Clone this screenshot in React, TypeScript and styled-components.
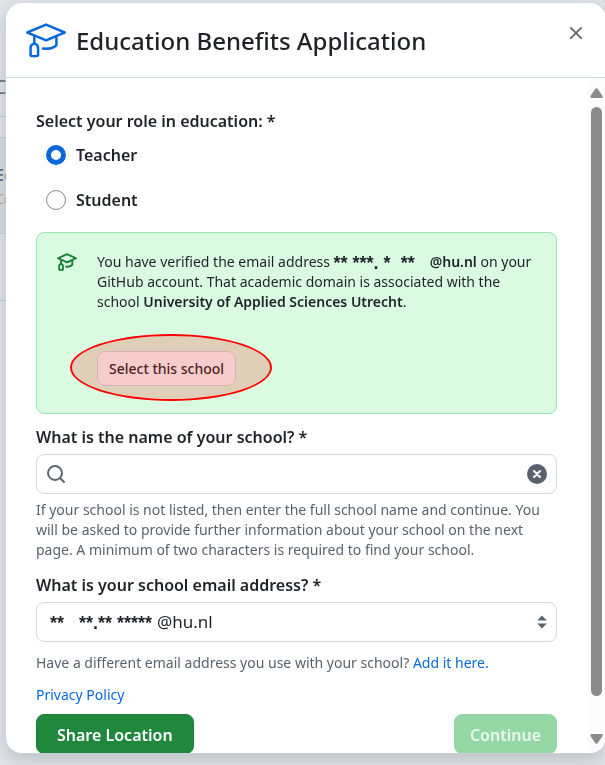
import React from "react";
import styled, { createGlobalStyle } from "styled-components";
import { GoMortarBoard } from "react-icons/go";

const GlobalStyle = createGlobalStyle`
  *, *::before, *::after { box-sizing: border-box; }
  body {
    margin: 0;
    font-family: "Noto Sans", "Open Sans", sans-serif;
    font-size: 14px;
    line-height: 20px;
    color: #1f2328;
    background: #e1e5e9;
    overflow: hidden;
  }
  button, input, select { font: inherit; color: inherit; }
  a { color: #0969da; text-decoration: none; }
`;

const Backdrop = styled.div`
  min-height: 100vh;
  padding-top: 77px;
  overflow: hidden;
  white-space: nowrap;
`;

const PageHeading = styled.p`
  margin: 0 0 0 -6px;
  height: 40px;
  font-size: 20px;
  color: #6b7075;
  border-bottom: 1px solid #c5cdd5;
`;

const PageCard = styled.div`
  margin-top: 20px;
  margin-left: -6px;
  height: 97px;
  padding-top: 27px;
  background: #d9dde1;
  border: 1px solid #c5cdd5;
`;

const PageCardTitle = styled.p`
  margin: 0;
  height: 24px;
  font-size: 16px;
  font-weight: 600;
  color: #59708c;
`;

const PageCardText = styled.p`
  margin: 0;
  color: #b0a6a4;
`;

const PageRule = styled.hr`
  margin: 66px 0 0;
  border: 0;
  border-top: 1px solid #c5cdd5;
`;

const Dialog = styled.div`
  position: fixed;
  inset: 3px -1px 12px 6px;
  display: flex;
  flex-direction: column;
  background: #fff;
  border-radius: 16px;
  box-shadow: 0 0 0 1px #d0d7de80, 0 6px 18px rgba(66, 74, 83, 0.25);
  overflow: hidden;
`;

const DialogHeader = styled.header`
  display: flex;
  align-items: center;
  flex: none;
  height: 75px;
  padding: 0 20px;
  gap: 10px;
  border-bottom: 1px solid #d0d7de;

  > svg { color: #0969da; flex: none; }
`;

const Title = styled.h1`
  flex: 1;
  margin: 0;
  padding-top: 2px;
  font-size: 24px;
  font-weight: 500;
  line-height: 32px;
`;

const IconButton = styled.button`
  display: grid;
  place-items: center;
  align-self: flex-start;
  width: 20px;
  height: 20px;
  margin-top: 20px;
  padding: 0;
  border: 0;
  background: none;
  color: #59636e;
`;

const DialogBody = styled.div`
  display: flex;
  flex: 1;
  min-height: 0;
`;

const Form = styled.form`
  flex: 1;
  min-width: 0;
  padding: 31px 30px 0;
  overflow: hidden;
`;

const RoleGroup = styled.fieldset`
  margin: 0 0 10px;
  padding: 0;
  border: 0;
`;

const Legend = styled.legend`
  padding: 0;
  font-size: 16px;
  font-weight: 600;
  line-height: 24px;
`;

const RadioLabel = styled.label`
  display: flex;
  align-items: center;
  gap: 10px;
  height: 45px;
  padding-left: 10px;
  font-size: 16px;
  font-weight: 600;

  &:first-of-type { margin-top: -1px; }
`;

const Radio = styled.input`
  appearance: none;
  flex: none;
  width: 20px;
  height: 20px;
  margin: 0;
  border: 1px solid #818b98;
  border-radius: 50%;
  background: #fff;

  &:checked { border: 5px solid #0969da; }
`;

const Notice = styled.section`
  display: flex;
  gap: 20px;
  padding: 19px 20px 27px;
  background: #dafbe1;
  border: 1px solid #9be3ad;
  border-radius: 8px;

  > svg { color: #1a7f37; flex: none; }
`;

const NoticeText = styled.p`
  margin: 0 0 39px;

  strong { font-weight: 600; }
`;

const Mask = styled.span`
  font-family: "Liberation Sans", sans-serif;
  font-size: 18px;
  line-height: 16px;
  font-weight: 700;
  vertical-align: text-bottom;
  white-space: pre;
`;

const Circled = styled.div`
  position: relative;
  width: max-content;
`;

const Ellipse = styled.span`
  position: absolute;
  inset: -17px -36px -15px -27px;
  border: 2px solid #f00;
  border-radius: 50%;
  background: rgba(248, 36, 20, 0.2);
  background-clip: padding-box;
  pointer-events: none;
`;

const SmallButton = styled.button`
  display: block;
  height: 35px;
  padding: 0 11px;
  border: 1px solid #d5d3da;
  border-radius: 8px;
  background: #f6f8fa;
  font-weight: 500;
`;

const FieldLabel = styled.label`
  display: block;
  margin: 12px 0 6px;
  font-size: 16px;
  font-weight: 600;
  line-height: 22px;
`;

const Control = styled.div`
  position: relative;
  display: flex;
  align-items: center;
  height: 40px;
  border: 1px solid #d1d9e0;
  border-radius: 8px;
  background: #fff;
`;

const SearchBox = styled(Control)`
  gap: 8px;
  padding: 0 9px;

  > svg { color: #59636e; flex: none; }
`;

const SearchInput = styled.input`
  flex: 1;
  min-width: 0;
  padding: 0;
  border: 0;
  outline: 0;
  background: none;
  font-size: 16px;
`;

const ClearButton = styled.button`
  display: grid;
  place-items: center;
  width: 20px;
  height: 20px;
  padding: 0;
  border: 0;
  border-radius: 50%;
  background: #59636e;
  color: #fff;
`;

const Hint = styled.p<{ $top: number }>`
  margin: ${(p) => p.$top}px 0 0;
  color: #59636e;

  & + ${FieldLabel} { margin-top: 14px; }
`;

const EmailSelect = styled.select`
  appearance: none;
  width: 100%;
  height: 100%;
  padding: 0 30px 0 120px;
  border: 0;
  border-radius: 8px;
  background: none;
  font-size: 17px;
`;

const SelectMask = styled(Mask)`
  position: absolute;
  left: 13px;
  top: 12px;
  pointer-events: none;
`;

const SelectArrows = styled.svg`
  position: absolute;
  right: 9px;
  pointer-events: none;
`;

const Policy = styled.p`
  margin: 12px 0 9px;
`;

const Actions = styled.div`
  display: flex;
  justify-content: space-between;
`;

const ActionButton = styled.button`
  height: 40px;
  padding: 2px 20px 0;
  border: 1px solid #1f7f3a;
  border-radius: 8px;
  background: #1f883d;
  color: #fff;
  font-size: 16px;
  font-weight: 600;

  &:disabled {
    padding: 2px 15px 0;
    border-color: #95d8a6;
    background: #95d8a6;
    color: #e9f7ed;
  }
`;

const ScrollTrack = styled.div`
  display: flex;
  flex: none;
  flex-direction: column;
  align-items: center;
  gap: 9px;
  width: 19px;
  padding: 10px 0 9px;
  background: #fcfcfc;

  > svg { flex: none; fill: #8b8b8b; }
`;

const ScrollThumb = styled.div`
  width: 11px;
  flex: 1;
  margin-bottom: 29px;
  border-radius: 6px;
  background: #8b8b8b;
`;

function SmallMortarBoard() {
  return (
    <svg width="20" height="20" viewBox="0 0 16 16" fill="currentColor" aria-hidden="true">
      <path d="M7.693 1.066a.747.747 0 0 1 .614 0l7.25 3.25a.75.75 0 0 1 0 1.368L13 6.831v2.794c0 1.024-.81 1.749-1.66 2.173-.893.447-2.075.702-3.34.702-.278 0-.55-.012-.816-.036a.75.75 0 0 1 .133-1.494c.22.02.45.03.683.03 1.082 0 2.025-.221 2.67-.543.69-.345.83-.682.83-.832V7.503L8.307 8.934a.747.747 0 0 1-.614 0L4 7.28v1.663c.296.105.575.275.812.512.438.438.688 1.059.688 1.796v3a.75.75 0 0 1-.75.75h-3a.75.75 0 0 1-.75-.75v-3c0-.737.25-1.358.688-1.796.237-.237.516-.407.812-.512V6.606L.443 5.684a.75.75 0 0 1 0-1.368ZM2.583 5 8 7.428 13.416 5 8 2.572ZM2.5 11.25v2.25H4v-2.25c0-.388-.125-.611-.25-.735a.697.697 0 0 0-.5-.203.707.707 0 0 0-.5.203c-.125.124-.25.347-.25.735Z" />
    </svg>
  );
}

function SearchIcon() {
  return (
    <svg width="20" height="20" viewBox="0 0 20 20" fill="none" stroke="currentColor" strokeWidth="1.9" strokeLinecap="round" aria-hidden="true">
      <circle cx="9" cy="9" r="7" />
      <path d="M14 14l4 4" />
    </svg>
  );
}

function CloseIcon() {
  return (
    <svg width="20" height="20" viewBox="0 0 20 20" fill="none" stroke="currentColor" strokeWidth="1.7" strokeLinecap="round" aria-hidden="true">
      <path d="M4.8 4.8l10.4 10.4M15.2 4.8L4.8 15.2" />
    </svg>
  );
}

export default function App() {
  return (
    <>
      <GlobalStyle />
      <Backdrop aria-hidden="true">
        <PageHeading>C</PageHeading>
        <PageCard>
          <PageCardTitle>Ed</PageCardTitle>
          <PageCardText>Co</PageCardText>
        </PageCard>
        <PageRule />
      </Backdrop>
      <Dialog role="dialog" aria-labelledby="dialog-title">
        <DialogHeader>
          <GoMortarBoard size={40} aria-hidden="true" />
          <Title id="dialog-title">Education Benefits Application</Title>
          <IconButton type="button" aria-label="Close">
            <CloseIcon />
          </IconButton>
        </DialogHeader>
        <DialogBody>
          <Form onSubmit={(e) => e.preventDefault()}>
            <RoleGroup>
              <Legend>Select your role in education: *</Legend>
              <RadioLabel>
                <Radio type="radio" name="role" value="teacher" defaultChecked />
                Teacher
              </RadioLabel>
              <RadioLabel>
                <Radio type="radio" name="role" value="student" />
                Student
              </RadioLabel>
            </RoleGroup>
            <Notice>
              <SmallMortarBoard />
              <div>
                <NoticeText>
                  You have verified the email address <Mask>{"** ***. *  **   "}</Mask>
                  <strong>@hu.nl</strong> on your GitHub account. That academic domain is
                  associated with the school{" "}
                  <strong>University of Applied Sciences Utrecht</strong>.
                </NoticeText>
                <Circled>
                  <SmallButton type="button">Select this school</SmallButton>
                  <Ellipse />
                </Circled>
              </div>
            </Notice>
            <FieldLabel htmlFor="school">What is the name of your school? *</FieldLabel>
            <SearchBox>
              <SearchIcon />
              <SearchInput id="school" type="text" />
              <ClearButton type="button" aria-label="Clear">
                <svg width="8" height="8" viewBox="0 0 8 8" stroke="currentColor" strokeWidth="2" strokeLinecap="round">
                  <path d="M1 1l6 6M7 1L1 7" />
                </svg>
              </ClearButton>
            </SearchBox>
            <Hint $top={6}>
              If your school is not listed, then enter the full school name and continue. You
              will be asked to provide further information about your school on the next
              page. A minimum of two characters is required to find your school.
            </Hint>
            <FieldLabel htmlFor="email">What is your school email address? *</FieldLabel>
            <Control>
              <EmailSelect id="email">
                <option>@hu.nl</option>
              </EmailSelect>
              <SelectMask>{"**   **.** *****"}</SelectMask>
              <SelectArrows width="10" height="14" viewBox="0 0 10 14" fill="#59636e" aria-hidden="true">
                <path d="M5 0.5L9.7 5.5H0.3ZM0.3 8.5H9.7L5 13.5Z" />
              </SelectArrows>
            </Control>
            <Hint $top={11}>
              Have a different email address you use with your school? <a href="#add">Add it here.</a>
            </Hint>
            <Policy>
              <a href="#privacy">Privacy Policy</a>
            </Policy>
            <Actions>
              <ActionButton type="button">Share Location</ActionButton>
              <ActionButton type="submit" disabled>
                Continue
              </ActionButton>
            </Actions>
          </Form>
          <ScrollTrack aria-hidden="true">
            <svg width="13" height="10" viewBox="0 0 13 10">
              <path d="M5.4 .8Q6.5-.3 7.6.8L12.6 8Q13.1 9.8 11.5 10H1.5Q-.1 9.8.4 8Z" />
            </svg>
            <ScrollThumb />
            <svg width="13" height="10" viewBox="0 0 13 10">
              <path d="M5.4 9.2Q6.5 10.3 7.6 9.2L12.6 2Q13.1.2 11.5 0H1.5Q-.1.2.4 2Z" />
            </svg>
          </ScrollTrack>
        </DialogBody>
      </Dialog>
    </>
  );
}
